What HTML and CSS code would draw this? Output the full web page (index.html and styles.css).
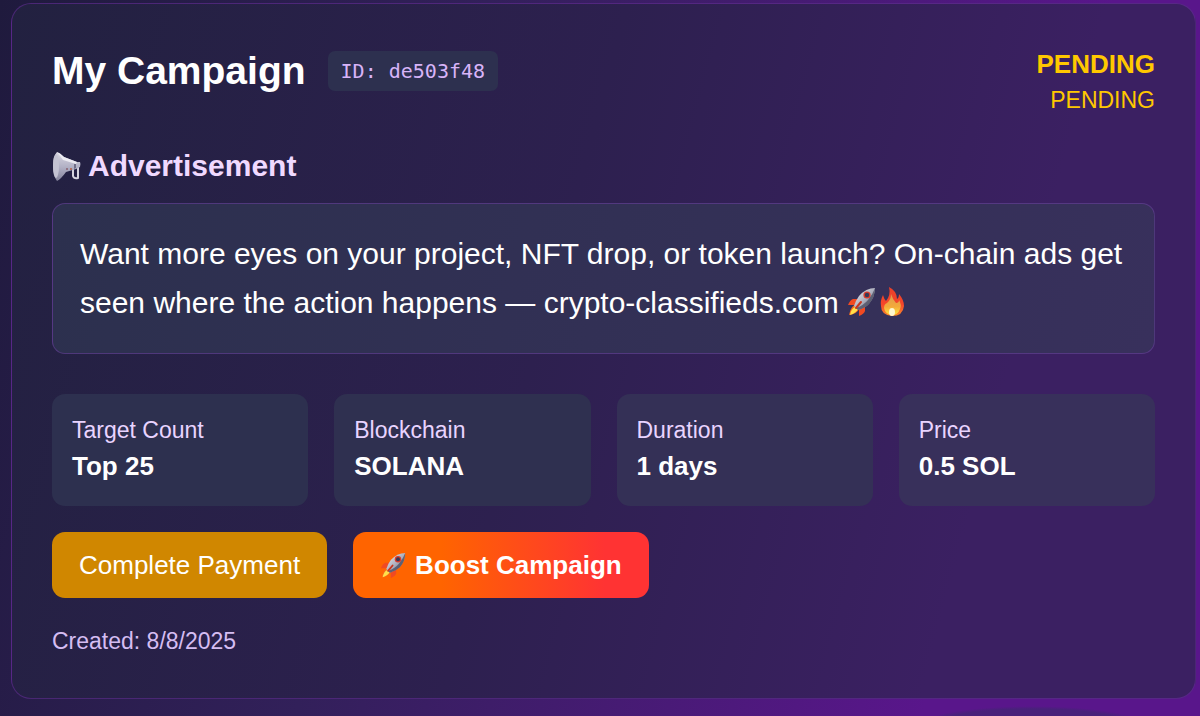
FILE: index.html
```
<!DOCTYPE html>
<html lang="en">
<head>
    <meta charset="UTF-8">
    <meta name="viewport" content="width=device-width, initial-scale=1.0">
    <title>My Campaign</title>
    <link rel="stylesheet" href="styles.css">
</head>
<body>
    <!-- Shared emoji drawings -->
    <svg class="defs" width="0" height="0" aria-hidden="true">
        <defs>
            <linearGradient id="metal" x1="0" y1="0" x2="1" y2="1">
                <stop offset="0" stop-color="#f4f4f8"/>
                <stop offset="0.55" stop-color="#a9abba"/>
                <stop offset="1" stop-color="#4d4f63"/>
            </linearGradient>
            <linearGradient id="horn" x1="0" y1="0" x2="0" y2="1">
                <stop offset="0" stop-color="#d9d8e2"/>
                <stop offset="0.5" stop-color="#b3b2c6"/>
                <stop offset="1" stop-color="#85849c"/>
            </linearGradient>
            <linearGradient id="flame" x1="0" y1="0" x2="0" y2="1">
                <stop offset="0" stop-color="#e8402a"/>
                <stop offset="0.6" stop-color="#f5462a"/>
                <stop offset="1" stop-color="#fb8c2c"/>
            </linearGradient>
            <linearGradient id="flame-core" x1="0" y1="0" x2="0" y2="1">
                <stop offset="0" stop-color="#dd9a50"/>
                <stop offset="0.6" stop-color="#f3aa3a"/>
                <stop offset="1" stop-color="#ffe640"/>
            </linearGradient>
        </defs>
        <symbol id="rocket" viewBox="0 0 30 30">
            <path fill="#f04a22" d="M11 12 6 12Q3 13 1 18L9 18ZM18 19 18 24Q17 27 12 29L12 21Z"/>
            <path fill="#f76b1c" d="M8 18Q4 19 2 28Q10 27 12 22Z"/>
            <path fill="#ffe04a" d="M8 20Q4 22 3 28Q9 26 11 22Z"/>
            <path fill="url(#metal)" d="M28 1Q19 1 12 9Q9 13 7 19L11 23Q18 21 22 17Q28 10 28 1Z"/>
            <path fill="#4b4d61" d="M28 1Q28 10 22 17Q18 21 11 23L9 21Q17 18 21 13Q26 7 28 1Z" opacity=".75"/>
            <circle cx="20" cy="8" r="3.6" fill="#d93a2b"/>
            <circle cx="20" cy="8" r="2.2" fill="#353a59"/>
            <path stroke="#c9361f" stroke-width="2" stroke-linecap="round" d="M14 15 9 21"/>
        </symbol>
        <symbol id="fire" viewBox="0 0 30 30">
            <path fill="url(#flame)" d="M12 0Q20 4 20 12Q22 11 22 7Q27 13 27 19Q26 29 15 29Q4 28 4 19Q3 14 6 8Q7 12 9 14Q14 8 12 0Z"/>
            <path fill="url(#flame-core)" d="M14 7Q16 13 19 16Q22 16 22 13Q25 18 23 22Q21 28 15 28Q8 27 7 21Q7 17 10 16Q14 13 14 7Z"/>
            <ellipse cx="15" cy="25" rx="3" ry="4" fill="#fff8cf"/>
        </symbol>
        <symbol id="megaphone" viewBox="0 0 30 30">
            <path fill="none" stroke="#d5d4df" stroke-width="2" stroke-linejoin="round" d="M21 18V25Q22 28 26 27V13"/>
            <path fill="url(#horn)" d="M5 1Q8 2 12 6L25 11 28 11Q29 13 28 16L24 18 14 21Q9 28 5 30Q1 25 1 15Q1 5 5 1Z"/>
            <ellipse cx="4" cy="15" rx="3" ry="12" fill="#c4c3d2"/>
            <path fill="#ecebf2" d="M5 1Q8 2 12 6L25 11 24 13 11 9Q8 5 5 1Z"/>
            <path fill="#6f6e88" d="M22 13 24 13 24 17 22 18Z"/>
            <circle cx="19" cy="18" r="1" fill="#b55e42"/>
            <circle cx="15" cy="18" r="1" fill="#8a6270"/>
        </symbol>
    </svg>

    <main class="campaign-card">
        <header class="card-header">
            <div class="title-group">
                <h1>My Campaign</h1>
                <span class="campaign-id">ID: de503f48</span>
            </div>
            <div class="status">
                <div class="status-main">PENDING</div>
                <div class="status-sub">PENDING</div>
            </div>
        </header>

        <section class="advertisement">
            <h2><svg class="emoji" aria-hidden="true"><use href="#megaphone"/></svg>Advertisement</h2>
            <p class="ad-text">Want more eyes on your project, NFT drop, or token launch? On-chain ads get seen where the action happens — crypto-classifieds.com <svg class="emoji" aria-hidden="true"><use href="#rocket"/></svg><svg class="emoji" aria-hidden="true"><use href="#fire"/></svg></p>
        </section>

        <dl class="stats">
            <div class="stat">
                <dt>Target Count</dt>
                <dd>Top 25</dd>
            </div>
            <div class="stat">
                <dt>Blockchain</dt>
                <dd>SOLANA</dd>
            </div>
            <div class="stat">
                <dt>Duration</dt>
                <dd>1 days</dd>
            </div>
            <div class="stat">
                <dt>Price</dt>
                <dd>0.5 SOL</dd>
            </div>
        </dl>

        <div class="actions">
            <button type="button" class="btn btn-pay">Complete Payment</button>
            <button type="button" class="btn btn-boost"><svg class="emoji" aria-hidden="true"><use href="#rocket"/></svg>Boost Campaign</button>
        </div>

        <p class="created">Created: 8/8/2025</p>
    </main>
</body>
</html>
```
FILE: styles.css
```
* {
    box-sizing: border-box;
}
html {
    min-height: 100%;
    background:
        radial-gradient(110px 18px at 86% 101%, #48217a 85%, transparent 100%),
        linear-gradient(105deg, #1f1a3d 0%, #32205a 35%, #59168b 80%);
}
body {
    margin: 0;
    padding: 3px 4px 18px 11px;
    font-family: "Liberation Sans", Arial, sans-serif;
    color: #fff;
}
h1, h2, p, dl, dd {
    margin: 0;
}
.defs {
    position: absolute;
}
.campaign-card {
    padding: 40px;
    border: 1px solid rgba(130, 50, 190, 0.4);
    border-radius: 20px;
    background: linear-gradient(105deg, #222140 0%, #2d204f 45%, #3b2062 80%, #3b2062 100%);
}
.card-header {
    display: flex;
    justify-content: space-between;
    align-items: flex-start;
    margin-bottom: 26px;
}
.title-group {
    display: flex;
    align-items: center;
    gap: 22px;
}
h1 {
    font-size: 39px;
    line-height: 53px;
}
.campaign-id {
    padding: 0 13px;
    border-radius: 7px;
    background: #2d304f;
    color: #d8b4f8;
    font-family: "DejaVu Sans Mono", monospace;
    font-size: 20px;
    line-height: 40px;
}
.status {
    color: #ffc800;
    text-align: right;
}
.status-main {
    font-size: 26px;
    font-weight: bold;
    line-height: 40px;
}
.status-sub {
    font-size: 23px;
    line-height: 33px;
}
.emoji {
    width: 30px;
    height: 30px;
    vertical-align: -4px;
}
h2 {
    display: flex;
    align-items: center;
    gap: 6px;
    margin-bottom: 14px;
    color: #f0d9ff;
    font-size: 30px;
    line-height: 46px;
}
.ad-text {
    padding: 25px 27px 26px;
    border: 1px solid rgba(130, 70, 190, 0.4);
    border-radius: 13px;
    background: linear-gradient(105deg, #2c304e, #38305c);
    font-size: 30px;
    line-height: 49px;
}
.stats {
    display: grid;
    grid-template-columns: repeat(4, 1fr);
    gap: 26px;
    margin: 40px 0 26px;
}
.stat {
    padding: 20px;
    border-radius: 13px;
    background: #2d304f;
}
.stat:nth-child(2) {
    background: #2f3050;
}
.stat:nth-child(3) {
    background: #343056;
}
.stat:nth-child(4) {
    background: #38305b;
}
dt {
    color: #e9d4ff;
    font-size: 23px;
    line-height: 33px;
}
dd {
    font-size: 26px;
    font-weight: bold;
    line-height: 39px;
}
.actions {
    display: flex;
    gap: 26px;
}
.btn {
    display: flex;
    align-items: center;
    gap: 8px;
    height: 66px;
    padding: 0 27px;
    border: 0;
    border-radius: 13px;
    color: #fff;
    font-family: inherit;
    font-size: 26px;
    cursor: pointer;
}
.btn-pay {
    background: #d08700;
}
.btn-boost {
    background: linear-gradient(90deg, #ff6400 30%, #ff3333 85%);
    font-weight: bold;
}
.btn .emoji {
    width: 27px;
    height: 27px;
}
.created {
    margin-top: 27px;
    color: #d5bdf2;
    font-size: 23px;
    line-height: 33px;
}
```
